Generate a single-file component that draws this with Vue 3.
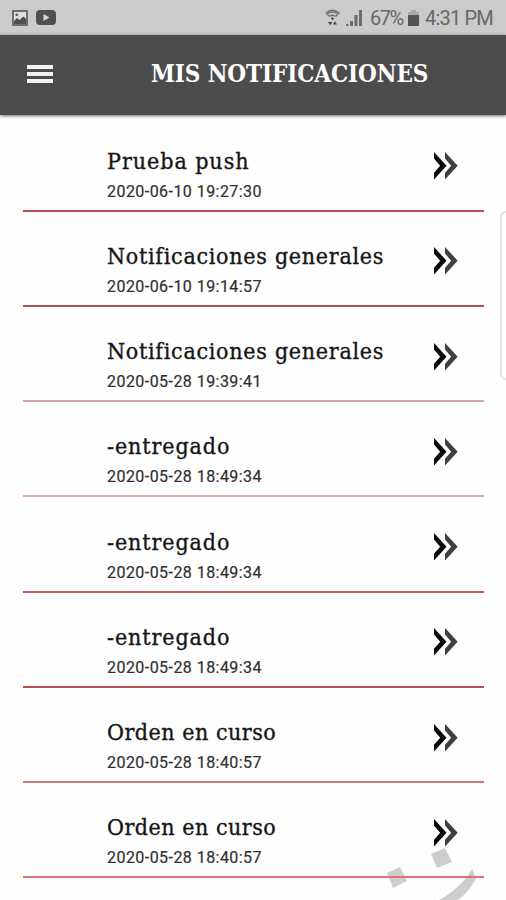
<template>
  <div class="screen">
    <div class="status-bar">
      <div class="status-left">
        <svg width="16" height="16" viewBox="0 0 16 16">
          <rect x="1" y="1" width="14" height="14" fill="#dedede" stroke="#555" stroke-width="1.6" />
          <path d="M2 14V11l3-3 2.5 2 4-3.5L14 9v5z" fill="#505050" />
          <circle cx="4.8" cy="4.8" r="1.3" fill="#555" />
        </svg>
        <svg width="20" height="15" viewBox="0 0 20 15">
          <rect width="20" height="15" rx="4" fill="#505050" />
          <path d="M7.5 4v7l6-3.5z" fill="#d6d6d6" />
        </svg>
      </div>
      <div class="status-right">
        <svg class="wifi" width="15" height="17" viewBox="0 0 15 17">
          <g fill="none" stroke="#6c6c6c" stroke-width="1.4">
            <path d="M1 4Q7.5-1.5 14 4L10.5 7.5M1 4l3.5 3.5" />
            <path d="M3 4.5Q7.5 1.8 12 4.5M5 7.2q2.5-1.8 5 0" />
          </g>
          <path d="M3 13h4.4l-2.2 3.2zM8 15.5h4l-2-3.2zM6 9.5l1.5-1.5L9 9.5l-1.5 1.8z" fill="#484848" />
        </svg>
        <svg class="signal" width="17" height="16" viewBox="0 0 17 16">
          <path d="M0 16v-2h2.5v2zM4 16v-5h3v5zM8.5 16V5h3v11zM13 16V0h3v16z" fill="#6c6c6c" />
        </svg>
        <span class="percent">67%</span>
        <svg class="battery" width="11" height="16" viewBox="0 0 11 16">
          <path d="M0 2h3V0h5v2h3v3H0z" fill="#aaa" />
          <path d="M0 5h11v11H0z" fill="#555" />
        </svg>
        <span class="clock">4:31 PM</span>
      </div>
    </div>

    <header class="toolbar">
      <button class="menu" aria-label="Menu">
        <span></span>
        <span></span>
        <span></span>
      </button>
      <h1>MIS NOTIFICACIONES</h1>
    </header>

    <svg class="watermark" width="120" height="60" viewBox="0 0 120 60">
      <path d="M7 32l13-6 7 14-14 7zM51 13l14-6 7 14-15 6zM92 28l4 9c-5 11-12 18-20 23H57c14-7 26-17 35-32z" fill="#cdcdcd" />
    </svg>

    <ul class="list">
      <li v-for="(item, i) in items" :key="i" class="row" :style="{ borderColor: item.line }">
        <div class="info">
          <div :class="['title', item.kind]">{{ item.title }}</div>
          <div class="date">{{ item.date }}</div>
        </div>
        <svg class="chevrons" width="24" height="28" viewBox="0 0 24 28">
          <path d="M0 0l12.5 13.7L0 27.4v-6.6l6.2-7.1L0 6.6z" fill="#080808" />
          <path d="M11 0l12.7 13.7L11 27.4v-6.6l6.2-7.1L11 6.6z" fill="#404040" />
        </svg>
      </li>
    </ul>

    <div class="edge-handle"></div>
  </div>
</template>

<script setup>
const items = [
  { title: 'Prueba push', date: '2020-06-10 19:27:30', kind: 'prueba', line: '#c44a4e' },
  { title: 'Notificaciones generales', date: '2020-06-10 19:14:57', kind: 'general', line: '#b05052' },
  { title: 'Notificaciones generales', date: '2020-05-28 19:39:41', kind: 'general', line: '#d5a5a6' },
  { title: '-entregado', date: '2020-05-28 18:49:34', kind: 'entrega', line: '#e1a9aa' },
  { title: '-entregado', date: '2020-05-28 18:49:34', kind: 'entrega', line: '#c95555' },
  { title: '-entregado', date: '2020-05-28 18:49:34', kind: 'entrega', line: '#b94b4d' },
  { title: 'Orden en curso', date: '2020-05-28 18:40:57', kind: 'orden', line: '#d77678' },
  { title: 'Orden en curso', date: '2020-05-28 18:40:57', kind: 'orden', line: '#e66f6f' },
]
</script>

<style>
body {
  margin: 0;
  background: #fefefe;
}
</style>

<style scoped>
.screen {
  position: relative;
  width: 506px;
  height: 900px;
  overflow: hidden;
  background: #fefefe;
}

.status-bar {
  display: flex;
  justify-content: space-between;
  box-sizing: border-box;
  height: 35px;
  padding: 0 12px;
  background: #cbcbcb;
  color: #686868;
  font: 20px/35px Roboto, sans-serif;
}

.status-left,
.status-right {
  display: flex;
  align-items: center;
}

.status-left {
  gap: 8px;
}

.wifi {
  margin-right: 6px;
}

.signal {
  margin-right: 7px;
}

.percent {
  width: 34px;
  padding-top: 2px;
  letter-spacing: -1.5px;
}

.battery {
  margin: 0 6px 0 4px;
}

.clock {
  width: 69px;
  padding-top: 2px;
  letter-spacing: -0.8px;
  white-space: nowrap;
}

.toolbar {
  display: flex;
  align-items: center;
  box-sizing: border-box;
  height: 80px;
  padding-left: 27px;
  background: #4c4c4c;
  box-shadow: 0 1px 3px rgba(0, 0, 0, 0.6);
}

.menu {
  display: flex;
  flex-direction: column;
  gap: 3px;
  width: 26px;
  padding: 0;
  margin-top: -2px;
  border: 0;
  background: none;
}

.menu span {
  height: 4px;
  background: #f2f2f2;
}

h1 {
  margin: -3px 0 0 98px;
  color: #fff;
  font: bold 24px/32px "DejaVu Serif Condensed", "DejaVu Serif", serif;
  font-stretch: condensed;
  letter-spacing: -0.1px;
  white-space: nowrap;
}

.list {
  position: relative;
  margin: 0;
  padding: 1.25px 22px 0 23px;
  list-style: none;
}

.row {
  display: flex;
  justify-content: space-between;
  box-sizing: border-box;
  height: 95.25px;
  padding: 28.4px 26px 0 84px;
  border-bottom: 2px solid;
}

.title {
  height: 33px;
  color: #161616;
  font: 23px/32px "DejaVu Serif Condensed", "DejaVu Serif", serif;
  font-stretch: condensed;
  -webkit-text-stroke: 0.35px #161616;
  white-space: nowrap;
}

.prueba {
  letter-spacing: 0.95px;
}

.general {
  letter-spacing: 0.72px;
}

.entrega {
  letter-spacing: 0.9px;
}

.orden {
  letter-spacing: 0.5px;
}

.date {
  color: #303030;
  font: 16px/28px Roboto, sans-serif;
  letter-spacing: 0.45px;
  -webkit-text-stroke: 0.2px #303030;
  white-space: nowrap;
}

.chevrons {
  flex: none;
  margin-top: 7.6px;
}

.watermark {
  position: absolute;
  left: 380px;
  top: 841px;
}

.edge-handle {
  position: absolute;
  left: 500px;
  top: 211px;
  box-sizing: border-box;
  width: 14px;
  height: 169px;
  border: 2px solid #e2e2e2;
  border-radius: 6px;
  background: #fff;
}
</style>
